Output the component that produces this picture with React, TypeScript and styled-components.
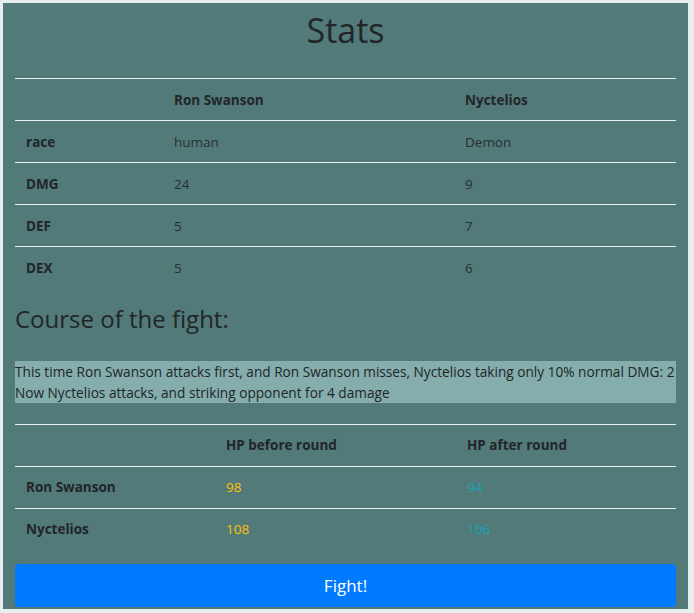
import React from "react";
import styled, { createGlobalStyle } from "styled-components";

const Global = createGlobalStyle`
  html, body { margin: 0; padding: 0; background: #e6eeee; }
  body { font-family: "Open Sans", "Noto Sans", "Liberation Sans", sans-serif; color: #212529; }
  * { box-sizing: border-box; }
`;

const Page = styled.div`
  padding: 3px 6px 4px 3px;
`;

const Panel = styled.div`
  background: #527a78;
  padding: 0 12px 2px 12px;
  display: flex;
  flex-direction: column;
`;

const Title = styled.h1`
  margin: 0;
  height: 75px;
  padding-top: 6px;
  text-align: center;
  font-size: 34px;
  font-weight: 500;
  line-height: 42px;
  color: #212529;
`;

const Table = styled.table`
  width: 100%;
  border-collapse: collapse;
  font-size: 13.5px;
  color: #212529;
`;

const HeadCell = styled.th<{ $w?: number }>`
  text-align: left;
  font-weight: 700;
  height: 42px;
  padding: 0 11px;
  border-top: 1px solid #e9eeee;
  border-bottom: 1px solid #e9eeee;
  width: ${(p) => (p.$w ? `${p.$w}px` : "auto")};
`;

const RowHead = styled.th`
  text-align: left;
  font-weight: 700;
  height: 42px;
  padding: 0 11px;
  border-top: 1px solid #e9eeee;
`;

const Cell = styled.td<{ $tone?: "warn" | "info" }>`
  height: 42px;
  padding: 0 11px;
  border-top: 1px solid #e9eeee;
  font-weight: 400;
  color: ${(p) =>
    p.$tone === "warn" ? "#ffc107" : p.$tone === "info" ? "#17a2b8" : "#263033"};
`;

const Body = styled.tbody`
  tr:first-child > * { border-top: none; }
`;

const Subtitle = styled.h3`
  margin: 0;
  padding-top: 14px;
  height: 72px;
  font-size: 24px;
  font-weight: 500;
  line-height: 32px;
`;

const Log = styled.div`
  background: #84adab;
  font-size: 13.65px;
  line-height: 21px;
  padding: 0;
  margin-bottom: 21px;
  white-space: nowrap;
`;

const Button = styled.button`
  margin-top: 14px;
  height: 43px;
  width: 100%;
  border: none;
  border-radius: 4px;
  background: #007bff;
  color: #fff;
  font-family: inherit;
  font-size: 17px;
  cursor: pointer;
`;

const stats = [
  ["race", "human", "Demon"],
  ["DMG", "24", "9"],
  ["DEF", "5", "7"],
  ["DEX", "5", "6"],
];

const hp = [
  ["Ron Swanson", "98", "94"],
  ["Nyctelios", "108", "106"],
];

export default function App() {
  return (
    <>
      <Global />
      <Page>
        <Panel>
          <Title>Stats</Title>
          <Table>
            <thead>
              <tr>
                <HeadCell $w={148} />
                <HeadCell $w={291}>Ron Swanson</HeadCell>
                <HeadCell>Nyctelios</HeadCell>
              </tr>
            </thead>
            <Body>
              {stats.map((r) => (
                <tr key={r[0]}>
                  <RowHead>{r[0]}</RowHead>
                  <Cell>{r[1]}</Cell>
                  <Cell>{r[2]}</Cell>
                </tr>
              ))}
            </Body>
          </Table>
          <Subtitle>Course of the fight:</Subtitle>
          <Log>
            <div>This time Ron Swanson attacks first, and Ron Swanson misses, Nyctelios taking only 10% normal DMG: 2</div>
            <div>Now Nyctelios attacks, and striking opponent for 4 damage</div>
          </Log>
          <Table>
            <thead>
              <tr>
                <HeadCell $w={200} />
                <HeadCell $w={241}>HP before round</HeadCell>
                <HeadCell>HP after round</HeadCell>
              </tr>
            </thead>
            <Body>
              {hp.map((r) => (
                <tr key={r[0]}>
                  <RowHead>{r[0]}</RowHead>
                  <Cell $tone="warn">{r[1]}</Cell>
                  <Cell $tone="info">{r[2]}</Cell>
                </tr>
              ))}
            </Body>
          </Table>
          <Button>Fight!</Button>
        </Panel>
      </Page>
    </>
  );
}
